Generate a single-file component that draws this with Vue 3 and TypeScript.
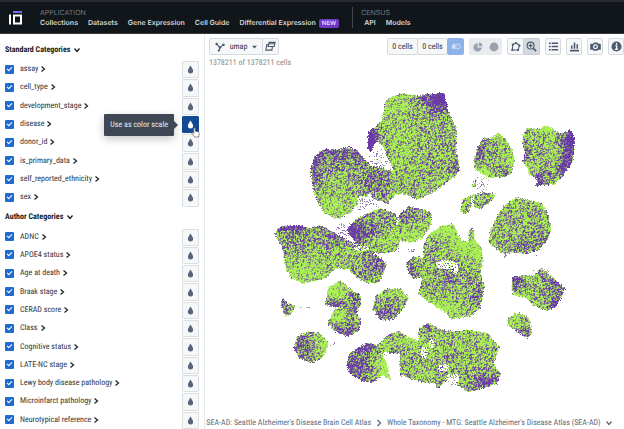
<script setup lang="ts">
import { onMounted, ref } from 'vue'

interface Category {
  name: string
  active?: boolean
}
interface Group {
  title: string
  items: Category[]
}

const groups: Group[] = [
  {
    title: 'Standard Categories',
    items: [
      { name: 'assay' },
      { name: 'cell_type' },
      { name: 'development_stage' },
      { name: 'disease', active: true },
      { name: 'donor_id' },
      { name: 'is_primary_data' },
      { name: 'self_reported_ethnicity' },
      { name: 'sex' },
    ],
  },
  {
    title: 'Author Categories',
    items: [
      { name: 'ADNC' },
      { name: 'APOE4 status' },
      { name: 'Age at death' },
      { name: 'Braak stage' },
      { name: 'CERAD score' },
      { name: 'Class' },
      { name: 'Cognitive status' },
      { name: 'LATE-NC stage' },
      { name: 'Lewy body disease pathology' },
      { name: 'Microinfarct pathology' },
      { name: 'Neurotypical reference' },
    ],
  },
]

const appLinks = ['Collections', 'Datasets', 'Gene Expression', 'Cell Guide']
const censusLinks = ['API', 'Models']

// Cluster outlines in embedding space: x0,y0 x1,y1 ...
const clusters: string[] = [
  '384,103 388,98 393,95 403,93 417,95 430,93 443,92 445,98 448,112 456,127 456,152 459,170 453,177 445,183 433,192 417,199 403,193 395,194 387,203 373,199 370,193 358,203 350,212 338,219 325,213 317,202 312,187 310,170 313,158 319,151 325,148 338,149 348,146 358,151 370,165 383,168 393,170 385,152 377,140 375,143 370,152 367,148 368,131 382,120',
  '483,137 490,138 498,132 505,138 512,150 514,160 511,173 503,177 488,177 475,169 473,160 477,147',
  '522,135 527,127 538,128 547,125 557,131 562,133 570,129 574,137 573,160 563,175 553,184 535,186 537,180 528,173 527,167 522,162 525,152 522,145',
  '471,186 476,177 475,187',
  '460,210 463,198 472,194 482,192 495,193 492,200 480,208 475,207 472,202 468,212 463,213',
  '515,197 530,200 542,203 548,215 551,227 547,240 537,250 527,253 500,252 488,242 490,230 497,215 503,205',
  '452,223 457,233 462,240 468,242 469,228 474,229 474,240 480,245 483,257 480,272 484,285 480,307 472,315 450,319 445,312 430,303 418,293 422,277 413,279 407,270 406,262 413,256 423,257 423,243 430,232 440,226',
  '512,276 533,275 540,268 547,272 553,278 565,288 560,298 556,306 547,311 533,305 527,298 513,295 511,286',
  '507,317 518,312 528,317 532,333 527,338 515,330 507,325',
  '274,233 280,225 302,225 308,228 320,225 332,231 348,240 362,248 380,257 386,265 383,273 378,282 368,283 357,278 348,269 335,268 325,278 302,283 290,277 285,267 282,248',
  '346,230 355,219 368,212 380,208 393,212 397,215 408,206 422,208 431,213 431,223 422,237 412,242 400,240 397,250 383,253 368,252 355,243',
  '325,300 328,287 340,280 348,287 361,295 360,305 356,313 360,318 359,330 347,336 333,330 327,323 332,312 337,307 325,305',
  '372,308 375,295 387,288 400,288 408,297 403,308 393,319 380,320',
  '280,302 283,297 287,303 295,305 292,313 285,316 282,310',
  '293,347 297,335 310,331 320,333 328,343 322,358 310,363 298,358',
  '346,362 350,352 358,347 367,342 377,345 387,335 398,331 410,338 418,340 418,328 428,322 438,328 452,331 468,329 488,333 499,347 493,363 500,373 497,383 468,392 458,385 450,377 443,382 438,389 435,383 422,382 400,375 399,353 387,353 385,357 388,370 390,379 382,375 372,382 362,381 348,372',
]

// [x, y, rx, ry, amount]; positive amounts lean purple, negative lean green
const tints: number[][] = [
  [440, 97, 15, 13, 0.85], [456, 168, 8, 14, 0.25], [368, 138, 8, 16, 0.95],
  [396, 105, 14, 12, -0.2], [400, 150, 14, 22, -0.18], [340, 152, 34, 12, 0.4],
  [313, 172, 10, 20, 0.3], [375, 180, 14, 16, 0.25], [338, 206, 22, 14, -0.2],
  [480, 146, 10, 14, 0.22], [508, 174, 8, 6, 0.3], [480, 172, 10, 5, -0.5],
  [498, 133, 8, 5, -0.4], [512, 155, 6, 10, -0.3], [571, 138, 9, 16, 0.8],
  [567, 166, 8, 14, 0.5], [547, 127, 12, 6, -0.6], [537, 182, 8, 8, 0.5],
  [524, 156, 5, 8, 0.4], [527, 170, 5, 7, -0.4], [532, 245, 18, 10, 0.2],
  [295, 226, 20, 6, 0.5], [345, 236, 24, 8, 0.4], [378, 262, 14, 12, 0.35],
  [290, 242, 16, 10, 0.2], [305, 272, 30, 12, -0.22], [368, 225, 18, 14, 0.2],
  [353, 228, 7, 7, 0.4], [405, 215, 14, 7, 0.3], [414, 235, 16, 10, -0.25],
  [385, 242, 14, 12, -0.18], [445, 230, 14, 10, -0.3], [466, 244, 14, 8, -0.4],
  [478, 255, 6, 14, -0.3], [430, 250, 8, 12, 0.15], [453, 274, 10, 8, 0.3],
  [410, 272, 7, 8, 0.3], [440, 308, 20, 8, -0.35], [478, 295, 10, 18, 0.15],
  [514, 280, 6, 8, 0.5], [556, 285, 12, 8, 0.35], [556, 306, 8, 8, 0.5],
  [520, 298, 10, 6, -0.4], [335, 290, 12, 8, -0.3], [332, 304, 9, 4, 0.5],
  [354, 304, 8, 14, 0.25], [345, 333, 16, 7, 0.5], [338, 316, 10, 6, -0.25],
  [385, 315, 14, 8, 0.35], [400, 292, 10, 6, -0.2], [301, 345, 10, 12, 0.35],
  [324, 345, 8, 12, -0.35], [284, 303, 4, 6, 0.3], [354, 366, 14, 18, 0.45],
  [365, 346, 12, 6, 0.3], [386, 366, 9, 18, -0.5], [390, 351, 14, 4, 0.3],
  [412, 340, 12, 8, -0.3], [428, 325, 10, 6, 0.15], [488, 382, 16, 9, 0.4],
  [488, 338, 14, 8, -0.2], [526, 334, 8, 6, 0.35], [510, 320, 6, 8, -0.25],
]

// Thinly populated gaps inside clusters: [x, y, rx, ry, share of cells kept]
const gaps: number[][] = [
  [445, 264, 10, 5, 0.25], [454, 268, 4, 6, 0.4], [424, 352, 4, 6, 0.4],
  [431, 343, 3, 5, 0.4], [443, 367, 6, 4, 0.4], [452, 378, 7, 5, 0.4],
  [380, 156, 5, 12, 0.3], [361, 248, 8, 3, 0.5], [362, 200, 6, 5, 0.4],
  [397, 219, 2, 6, 0.5], [386, 355, 4, 4, 0.3], [472, 200, 2, 5, 0.3],
]

// Loose cells around the clusters: [x, y, rx, ry, density]
const strays: number[][] = [
  [378, 160, 10, 12, 0.22], [362, 204, 20, 6, 0.22], [344, 229, 10, 7, 0.28],
  [482, 184, 8, 10, 0.14], [328, 343, 8, 3, 0.2], [304, 307, 8, 1, 0.3],
  [411, 250, 4, 2, 0.5], [505, 254, 2, 4, 0.5], [540, 272, 9, 6, 0.2],
  [455, 382, 8, 5, 0.15], [537, 257, 4, 5, 0.06], [396, 252, 5, 4, 0.1],
]

const originX = 205
const originY = 69
const plotW = 419
const plotH = 348
const canvas = ref<HTMLCanvasElement | null>(null)

function reach(x: number, y: number, e: number[]): number {
  const dx = (x - e[0]) / e[2]
  const dy = (y - e[1]) / e[3]
  return dx * dx + dy * dy
}

function makeRandom(start: number): () => number {
  let state = start
  return () => {
    state = (state + 0x6d2b79f5) | 0
    let t = Math.imul(state ^ (state >>> 15), 1 | state)
    t = (t + Math.imul(t ^ (t >>> 7), 61 | t)) ^ t
    return ((t ^ (t >>> 14)) >>> 0) / 4294967296
  }
}

function drawEmbedding(el: HTMLCanvasElement) {
  const ctx = el.getContext('2d')
  if (!ctx) return
  const rand = makeRandom(90210)
  const noise = Array.from({ length: (plotW + 1) * (plotH + 1) }, rand)
  const path = new Path2D(clusters.map((c) => 'M' + c.split(' ').join('L') + 'Z').join(''))
  const image = ctx.createImageData(plotW, plotH)
  const green = [170, 242, 84]
  const purple = [106, 58, 168]
  for (let j = 0; j < plotH; j++) {
    for (let i = 0; i < plotW; i++) {
      const x = i + originX
      const y = j + originY
      const inside = ctx.isPointInPath(path, x + (rand() - 0.5) * 1.8, y + (rand() - 0.5) * 1.8)
      let density = inside ? 1 : 0
      if (inside) {
        for (const g of gaps) if (reach(x, y, g) < 1) density = Math.min(density, g[4])
      } else {
        for (const s of strays) {
          const r = reach(x, y, s)
          if (r < 1) density = Math.max(density, s[4] * (1.2 - r))
        }
      }
      if (rand() > density) continue
      let share = inside ? 0.4 : 0.7
      for (const t of tints) {
        const r = reach(x, y, t)
        if (r < 4) share += t[4] * Math.exp(-r)
      }
      // Neighbouring samples overlap, so each dot bleeds a little into the next
      const n = j * (plotW + 1) + i
      const grain = noise[n] * 0.58 + noise[n + 1] * 0.21 + noise[n + plotW + 1] * 0.21
      const level = (grain - 0.5) * 1.35 + 0.5
      const mix = Math.min(1, Math.max(0, (share - level) * 1.5 + 0.45))
      const at = (j * plotW + i) * 4
      for (let k = 0; k < 3; k++) image.data[at + k] = green[k] + (purple[k] - green[k]) * mix
      image.data[at + 3] = inside ? 255 : 190
    }
  }
  ctx.putImageData(image, 0, 0)
}

onMounted(() => {
  if (canvas.value) drawEmbedding(canvas.value)
})
</script>

<template>
  <div class="page">
    <header class="top">
      <a class="logo" href="#" aria-label="Home">
        <svg viewBox="0 0 14 14" width="14" height="14">
          <path d="M4 1h9" stroke="#7a6cf0" stroke-width="2" />
          <path d="M1 3.500v10" stroke="#fff" stroke-width="2" />
          <path d="M5 4.500h7v8h-7z" fill="none" stroke="#fff" stroke-width="2" />
        </svg>
      </a>
      <nav class="nav">
        <div class="nav-title">APPLICATION</div>
        <div class="links">
          <a v-for="l in appLinks" :key="l" href="#">{{ l }}</a>
          <a href="#">Differential Expression<span class="new">NEW</span></a>
        </div>
      </nav>
      <nav class="nav census">
        <div class="nav-title">CENSUS</div>
        <div class="links inset">
          <a v-for="l in censusLinks" :key="l" href="#">{{ l }}</a>
        </div>
      </nav>
    </header>

    <div class="body">
      <aside class="side">
        <template v-for="g in groups" :key="g.title">
          <button class="group" type="button">
            {{ g.title }}
            <svg viewBox="0 0 8 8" width="8" height="8"><path d="M1.500 2.500l2.500 3 2.500-3" /></svg>
          </button>
          <div v-for="c in g.items" :key="c.name" class="row">
            <label class="pick">
              <input type="checkbox" checked />
              <span>{{ c.name }}</span>
            </label>
            <button class="expand" type="button" :aria-label="c.name">
              <svg viewBox="0 0 8 8" width="8" height="8"><path d="M2.500 1.500l3 2.500-3 2.500" /></svg>
            </button>
            <button class="drop" :class="{ active: c.active }" type="button" aria-label="Use as color scale">
              <svg viewBox="0 0 8 10" width="7" height="9">
                <path d="M4 .5C5 2.500 7 4.500 7 6.500a3 3 0 0 1-6 0C1 4.500 3 2.500 4 .5z" fill="currentColor" />
              </svg>
              <span v-if="c.active" class="tip" role="tooltip">Use as color scale</span>
              <svg v-if="c.active" class="hand" viewBox="0 0 10 12" width="9" height="11">
                <path
                  d="M3 1.500c0-1.200 1.600-1.200 1.600 0v3l3.200.7c1 .2 1.400.8 1.300 1.600L8.700 11H4L1 7.200c-.6-.9.500-1.600 1.200-.9l.8.8z"
                  fill="#fff" stroke="#555" stroke-width=".7"
                />
              </svg>
            </button>
          </div>
        </template>
      </aside>

      <main class="main">
        <div class="tools">
          <div class="set">
            <button class="tool wide" type="button">
              <svg viewBox="0 0 12 12" width="10" height="10" class="ink">
                <path d="M2 2.500l4 4 4-3M6 6.500L4.500 11" fill="none" stroke="currentColor" stroke-width="1.300" />
                <circle cx="2" cy="2.500" r="1.500" /><circle cx="10.200" cy="3.300" r="1.500" />
                <circle cx="6" cy="6.500" r="1.500" /><circle cx="4.500" cy="10.300" r="1.300" />
              </svg>
              umap
              <svg viewBox="0 0 6 4" width="5" height="4" class="ink"><path d="M0 .5h6L3 3.800z" /></svg>
            </button>
            <button class="tool" type="button" aria-label="Duplicate view">
              <svg viewBox="0 0 12 12" width="11" height="11" class="line">
                <path d="M4.500 1.500h6.500l-1 4.500h-6.500zM3.300 4H2L1 10h6.500l.6-3.800M4.500 3h6" />
              </svg>
            </button>
          </div>
          <span class="grow"></span>
          <div class="set">
            <button class="tool cells" type="button">0 cells</button>
            <button class="tool cells" type="button">0 cells</button>
            <button class="tool blue" type="button" aria-label="Compare">
              <svg viewBox="0 0 12 8" width="10" height="7">
                <circle cx="4" cy="4" r="3" fill="#d3e2fa" /><circle cx="8" cy="4" r="3" fill="none" stroke="#d3e2fa" />
                <path d="M6 1.500v5" stroke="#8db2ea" />
              </svg>
            </button>
          </div>
          <div class="set">
            <button class="tool off" type="button" aria-label="Subset" disabled>
              <svg viewBox="0 0 12 12" width="10" height="10">
                <path d="M5.500 1.500v5h5a5 5 0 1 1-5-5z" /><path d="M7 .5A5 5 0 0 1 11.500 5H7z" />
              </svg>
            </button>
            <button class="tool off" type="button" aria-label="Reset subset" disabled>
              <svg viewBox="0 0 12 12" width="10" height="10"><circle cx="6" cy="6" r="5.300" /></svg>
            </button>
          </div>
          <div class="set">
            <button class="tool" type="button" aria-label="Lasso">
              <svg viewBox="0 0 12 12" width="11" height="11" class="line">
                <path d="M3 4l3.500-1.800L10.300 5 8.800 9.800H2.500z" />
                <g class="dots"><circle cx="3" cy="4" r="1.200" /><circle cx="6.500" cy="2.200" r="1.200" /><circle cx="10.300" cy="5" r="1.200" /><circle cx="8.800" cy="9.800" r="1.200" /><circle cx="2.500" cy="9.800" r="1.200" /></g>
              </svg>
            </button>
            <button class="tool on" type="button" aria-label="Zoom">
              <svg viewBox="0 0 12 12" width="11" height="11" class="line">
                <circle cx="5" cy="5" r="3.800" /><path d="M3 5h4M5 3v4" /><path d="M8 8l3 3" stroke-width="1.800" />
              </svg>
            </button>
          </div>
          <button class="tool single" type="button" aria-label="Labels">
            <svg viewBox="0 0 12 12" width="11" height="11" class="line thick"><path d="M1 2.500h2M4 2.500h7M1 6h2M4 6h7M1 9.500h2M4 9.500h7" /></svg>
          </button>
          <button class="tool single" type="button" aria-label="Chart">
            <svg viewBox="0 0 12 12" width="11" height="11" class="line thick"><path d="M3 8.500V5M6 8.500V1.500M9 8.500V3.500M1 10.500h10" /></svg>
          </button>
          <button class="tool single" type="button" aria-label="Screenshot">
            <svg viewBox="0 0 12 12" width="11" height="11" class="ink">
              <path fill-rule="evenodd" d="M1 3h2.500L4.500 1.500h3.500L9 3h2q.8 0 .8.800v5q0 .8-.8.800h-2l-1 .9H4l-1-.9H1q-.8 0-.8-.8v-5Q.2 3 1 3zM6 3.500a2.700 2.700 0 1 0 .01 0zM6 4.800a1.400 1.400 0 1 1-.01 0z" />
            </svg>
          </button>
          <button class="tool single" type="button" aria-label="Info">
            <svg viewBox="0 0 12 12" width="11" height="11" class="ink">
              <circle cx="6" cy="6" r="5.500" /><path d="M6 2.200v1.800M4.800 5.300h1.400V9M4.500 9h3" fill="none" stroke="#fff" stroke-width="1.400" />
            </svg>
          </button>
        </div>
        <p class="count">1378211 of 1378211 cells</p>
        <canvas ref="canvas" class="plot" :width="plotW" :height="plotH"></canvas>
        <footer class="crumbs">
          <a href="#">SEA-AD: Seattle Alzheimer's Disease Brain Cell Atlas</a>
          <svg viewBox="0 0 8 8" width="8" height="8"><path d="M2.500 1l3 3-3 3" /></svg>
          <a href="#">Whole Taxonomy - MTG: Seattle Alzheimer's Disease Atlas (SEA-AD)</a>
          <svg viewBox="0 0 8 8" width="8" height="8"><path d="M1.500 2.500l2.500 3 2.500-3" /></svg>
        </footer>
      </main>
    </div>
  </div>
</template>

<style>
body {
  margin: 0;
  background: #fff;
}
</style>

<style scoped>
.page {
  display: flex;
  flex-direction: column;
  min-height: 100vh;
  font: 8px/12px "Roboto Condensed", Roboto, sans-serif;
  text-rendering: geometricPrecision;
  color: #30363c;
}
button {
  margin: 0;
  padding: 0;
  border: 0;
  background: none;
  font: inherit;
  color: inherit;
  text-rendering: inherit;
}
a {
  color: inherit;
  text-decoration: none;
}
svg {
  display: block;
  flex: none;
}
.top {
  display: flex;
  box-sizing: border-box;
  height: 34px;
  border-top: 2px solid #2b2a31;
  border-bottom: 1px solid #34373b;
  background: #11161a;
  font-family: Inter, sans-serif;
  font-size: 7px;
  line-height: 10px;
}
.logo {
  width: 40px;
  box-sizing: border-box;
  padding: 9px 0 0 9px;
}
.nav {
  padding-top: 6px;
}
.nav-title {
  color: #777b80;
}
.links {
  display: flex;
  gap: 10px;
  color: #d4d6d8;
  font-weight: 600;
  white-space: nowrap;
}
.inset {
  padding-left: 3px;
}
.new {
  margin-left: 3px;
  padding: 1px 3px;
  border-radius: 2px;
  background: #7038c4;
  color: #eadcff;
  font-size: 6px;
}
.census {
  position: relative;
  margin-left: 13px;
  padding-left: 9px;
}
.census::before {
  content: "";
  position: absolute;
  left: 0;
  top: 5px;
  height: 21px;
  border-left: 1px solid #44484c;
}
.body {
  display: flex;
  flex: 1;
}
.side {
  display: flex;
  flex-direction: column;
  flex: none;
  box-sizing: border-box;
  width: 205px;
  padding: 5px 5px 0;
  border-right: 1px solid #e8eaec;
}
.group {
  display: flex;
  align-items: center;
  gap: 3px;
  height: 21px;
  color: #15191d;
  font-weight: 700;
}
.group svg path,
.expand svg path,
.crumbs svg path {
  fill: none;
  stroke: currentColor;
  stroke-width: 1.3;
}
.row {
  display: flex;
  flex: 1 1 18px;
  align-items: center;
}
.pick {
  display: flex;
  align-items: center;
  gap: 6px;
}
.pick input {
  appearance: none;
  width: 9px;
  height: 9px;
  margin: 0;
  border-radius: 1px;
  background: #1f6bd0;
  display: grid;
  place-items: center;
}
.pick input::before {
  content: "";
  width: 4px;
  height: 2px;
  margin-bottom: 2px;
  border: solid #fff;
  border-width: 0 0 1px 1px;
  transform: rotate(-45deg);
}
.expand {
  margin-left: 1px;
  color: #22272c;
}
.drop {
  position: relative;
  display: grid;
  place-items: center;
  align-self: stretch;
  box-sizing: border-box;
  width: 17px;
  margin: 1px 0 0 auto;
  border: 1px solid #dcdfe2;
  border-radius: 1px;
  background: #f6f7f9;
  color: #56657a;
}
.drop.active {
  border-color: #134a93;
  background: #134a93;
  color: #fff;
}
.tip {
  position: absolute;
  right: 24px;
  top: -3px;
  padding: 5px 6px;
  border-radius: 1px;
  background: #3e4753;
  box-shadow: 0 3px 9px rgba(20, 30, 40, 0.25);
  color: #e8ebef;
  white-space: nowrap;
}
.tip::after {
  content: "";
  position: absolute;
  left: 100%;
  top: 7px;
  border: 4px solid transparent;
  border-left-color: #3e4753;
  border-right: 0;
}
.hand {
  position: absolute;
  left: 8px;
  top: 10px;
  z-index: 1;
}
.main {
  display: flex;
  flex-direction: column;
  flex: 1;
  min-width: 0;
}
.tools {
  display: flex;
  gap: 5px;
  padding: 4px 0 0 4px;
}
.grow {
  flex: 1;
}
.set {
  display: flex;
}
.tool {
  display: flex;
  align-items: center;
  justify-content: center;
  box-sizing: border-box;
  width: 17px;
  height: 17px;
  border: 1px solid #d5d9dd;
  border-radius: 2px;
  background: #f6f7f9;
  white-space: nowrap;
}
.single {
  width: 16px;
}
.set .tool + .tool {
  margin-left: -1px;
}
.wide {
  width: 54px;
  gap: 5px;
}
.cells {
  width: 31px;
}
.blue {
  border-color: #8db2ea;
  background: #8db2ea;
}
.off {
  border-color: #e9ebee;
  background: #e9ebee;
  fill: #98a1ad;
}
.on {
  border-color: #c5cbd2;
  background: #d5dae0;
}
.ink {
  color: #4c5a70;
  fill: currentColor;
}
.line {
  fill: none;
  stroke: #4c5a70;
  stroke-width: 1.2;
}
.thick {
  stroke-width: 1.7;
}
.dots {
  fill: #4c5a70;
  stroke: none;
}
.count {
  margin: 2px 0 0 4px;
  color: #85898e;
}
.plot {
  flex: 1 0 340px;
  width: 100%;
  min-height: 0;
  object-fit: contain;
}
.crumbs {
  display: flex;
  align-items: center;
  justify-content: center;
  gap: 4px;
  height: 12px;
  padding: 0 10px 0 0;
  color: #5c6b7c;
  white-space: nowrap;
}
</style>
